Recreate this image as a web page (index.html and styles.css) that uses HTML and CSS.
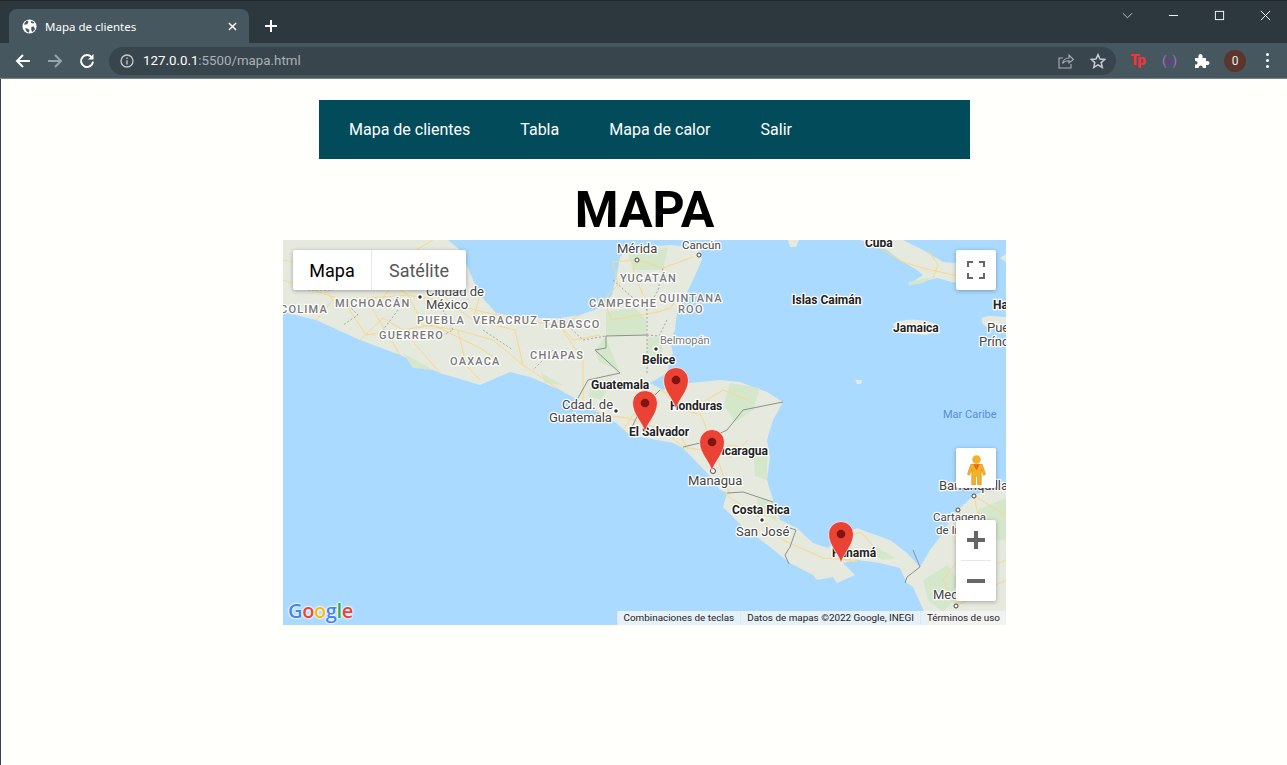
FILE: index.html
```html
<!DOCTYPE html>
<html lang="es">
<head>
    <meta charset="UTF-8">
    <meta name="viewport" content="width=device-width, initial-scale=1.0">
    <title>Mapa de clientes</title>
    <link rel="stylesheet" href="styles.css">
</head>
<body>
    <div class="navegador">
        <div class="pestanas">
            <div class="pestana">
                <svg class="globo" viewBox="0 0 16 16"><circle cx="8" cy="8" r="7.5" fill="#fff"/><path fill="#46575f" d="M2.2 6.2 5.5 5.6 7 3.2 5.6 1.6C3.9 2.3 2.7 4 2.2 6.2ZM7.4 14.4 8 11.6 5.6 10 3.4 9.8C3.9 12.3 5.4 14 7.4 14.4ZM10 8.2 12.6 8 13.8 10.6C13.2 12 12 13.2 10.8 13.8L9.8 11.4ZM9.4 2 9.8 4.2 12.2 4.8 13 3.8C12.2 2.9 10.8 2.2 9.4 2Z"/></svg>
                <span class="pestana-titulo">Mapa de clientes</span>
                <svg class="cerrar" viewBox="0 0 10 10"><path d="M1 1 9 9M9 1 1 9"/></svg>
            </div>
            <svg class="nueva" viewBox="0 0 12 12"><path d="M6 0V12M0 6H12"/></svg>
            <div class="ventana">
                <svg viewBox="0 0 12 12" class="v-chevron"><path d="M1 3.5 6 8.5 11 3.5"/></svg>
                <svg viewBox="0 0 12 12" class="v-btn"><path d="M1 6H11"/></svg>
                <svg viewBox="0 0 12 12" class="v-btn"><rect x="1.5" y="1.5" width="9" height="9"/></svg>
                <svg viewBox="0 0 12 12" class="v-btn"><path d="M1 1 11 11M11 1 1 11"/></svg>
            </div>
        </div>
        <div class="barra">
            <svg class="ico" viewBox="0 0 16 16"><path class="blanco" d="M15 8H2M8 2 2 8 8 14"/></svg>
            <svg class="ico" viewBox="0 0 16 16"><path class="gris" d="M1 8H14M8 2 14 8 8 14"/></svg>
            <svg class="ico" viewBox="0 0 16 16"><path class="blanco" d="M13.2 5A6 6 0 1 0 14 8.6"/><path class="relleno" d="M14.5 1V6.5H9Z"/></svg>
            <div class="direccion">
                <svg class="info" viewBox="0 0 14 14"><circle cx="7" cy="7" r="6"/><path d="M7 6.2V10.4M7 3.6V5"/></svg>
                <span class="url"><b>127.0.0.1</b>:5500/mapa.html</span>
                <svg class="compartir" viewBox="0 0 16 16"><path d="M5 5H1V15H13V11M4.5 10.5C5 7 8 5 11 5V2L15.5 6.5 11 10V7.8C8.5 7.8 6 8.5 4.5 10.5Z"/></svg>
                <svg class="estrella" viewBox="0 0 16 16"><path d="M8 1.6 10 6 14.8 6.4 11.2 9.6 12.3 14.4 8 11.9 3.7 14.4 4.8 9.6 1.2 6.4 6 6Z"/></svg>
            </div>
            <span class="ext-tp">Tp</span>
            <span class="ext-radio">(<i></i>)</span>
            <svg class="ext-puzzle" viewBox="0 0 16 16"><path d="M1 5H4.5C4 2.500 5 1 6.500 1S9 2.500 8.500 5H12V8.200C14 7.700 15.500 8.500 15.500 10S14 12.500 12 12V15H8.700C9 13.400 8 12.500 6.700 12.500S4.400 13.400 4.700 15H1V11.500C2.600 11.800 3.500 11 3.500 9.800S2.600 7.800 1 8.100Z"/></svg>
            <span class="avatar">0</span>
            <span class="kebab"><i></i><i></i><i></i></span>
        </div>
    </div>

    <div class="pagina">
        <nav class="menu">
            <a href="#">Mapa de clientes</a>
            <a href="#">Tabla</a>
            <a href="#">Mapa de calor</a>
            <a href="#">Salir</a>
        </nav>

        <h1>MAPA</h1>

        <div class="mapa">
            <svg class="lienzo" viewBox="0 0 723 385">
                <defs>
                    <g id="pin">
                        <path class="pin-cuerpo" d="M0 30C-1.500 20-12.500 12-12.500 0A12.500 12.500 0 1 1 12.500 0C12.500 12 1.500 20 0 30Z"/>
                        <circle class="pin-punto" r="4.300"/>
                    </g>
                </defs>

                <!-- tierra -->
                <path class="tierra" d="M0 0H165L177 10 197 55 213 73 240 78 277 78 297 75 317 68 329 55 334 33 337 17 345 8 387 5 417 8 419 20 410 40 399 63 394 73 392 90 387 100 390 113 387 120 384 133 367 143 380 150 407 143 437 140 457 142 484 152 500 162 490 180 484 200 487 217 484 240 490 260 497 280 514 288 530 303 545 308 557 297 574 288 587 293 607 300 624 313 637 327 647 310 657 297 667 280 675 270 691 255 723 243V385H647L630 347 624 343 617 328 597 323 574 320 560 323 572 335 554 343 550 337 534 340 530 335 507 323 487 307 460 287 440 267 444 253 437 250 424 233 400 208 390 203 347 195 333 183 300 163 277 150 247 137 227 132 197 145 157 133 117 115 77 100 33 80 0 72Z"/>
                <path class="tierra" d="M577 0 604 10 617 20 634 30 640 35 625 45 654 38 673 43 690 44 690 20 673 23 660 22 640 10 620 0Z"/>
                <path class="tierra" d="M610 84C620 78 640 79 650 83 658 90 650 94 642 95 625 93 612 92 610 84Z"/>
                <path class="tierra" d="M699 78C705 74 715 77 723 77V86L705 87C700 86 698 82 699 78Z"/>
                <path class="tierra" d="M717 18 723 14V22Z"/>
                <path class="tierra" d="M505 0H516L513 7H507Z"/>
                <path class="tierra" d="M572 140H579L578 144H574Z"/>

                <!-- zonas verdes -->
                <path class="verde" d="M323 72 352 68 363 80 363 94 323 96Z"/>
                <path class="verde" d="M364 98 378 96 380 112 364 124Z"/>
                <path class="verde" d="M447 143 477 148 470 170 452 182 441 165Z"/>
                <path class="verde" d="M322 97 336 130 316 122 312 110Z"/>
                <path class="verde" d="M310 140 330 140 318 160 305 156Z"/>
                <path class="verde" d="M625 42 650 37 640 43 627 45Z"/>
                <path class="verde" d="M640 340 665 325 680 350 660 372 645 360Z"/>
                <path class="verde" d="M694 270 723 258V300L705 300Z"/>
                <path class="verde" d="M470 205 484 210 484 240 472 236Z"/>
                <path class="verde" d="M590 305 612 318 600 320 585 312Z"/>
                <path class="verde" d="M345 12 385 8 380 30 350 30Z"/>
                <path class="verde" d="M120 113 150 130 130 128Z"/>
                <path class="verde" d="M258 133 280 145 262 143Z"/>
                <path class="verde" d="M473 258 490 262 494 282 478 272Z"/>

                <!-- carreteras -->
                <path class="via" d="M0 40 60 60 125 55 165 62 200 72 240 80 277 86 290 100 317 95"/>
                <path class="via" d="M60 60 83 95 120 90 150 85 197 108 215 120"/>
                <path class="via" d="M125 55 140 85 175 90 183 125 197 140"/>
                <path class="via" d="M140 20 165 62 190 80 232 90 240 125 277 150"/>
                <path class="via" d="M80 20 125 15 150 0"/>
                <path class="via" d="M0 20 40 28 80 20 110 45 125 55"/>
                <path class="via" d="M77 100 100 78 120 90 157 133"/>
                <path class="via" d="M33 80 50 60 30 35M110 45 90 70 117 115M175 90 210 100 240 125M197 55 190 80"/>
                <path class="via" d="M277 86 300 120 300 163"/>
                <path class="via" d="M330 22 354 20 380 28 410 17"/>
                <path class="via" d="M330 22 335 45 320 60 329 80 375 72 388 68 392 60"/>
                <path class="via" d="M354 20 350 30 360 55 375 72"/>
                <path class="via" d="M297 75 277 86"/>
                <path class="via" d="M340 190 360 160 378 150 400 170 418 175 430 205 440 235 447 255"/>
                <path class="via" d="M378 150 410 168 440 150 465 160"/>
                <path class="via" d="M345 178 380 190 400 207 418 210 450 205 480 215"/>
                <path class="via" d="M300 163 320 175 345 178"/>
                <path class="via" d="M441 254 470 272 500 300 540 318 570 320"/>
                <path class="via" d="M479 280 490 262 497 280"/>
                <path class="via" d="M565 296 578 292 590 306"/>
                <path class="via" d="M562 320 574 322 565 300"/>
                <path class="via" d="M691 256 700 300 680 350 673 366"/>
                <path class="via" d="M675 270 691 300 660 340 673 366 723 340"/>
                <path class="via" d="M691 256 723 275"/>
                <path class="via" d="M590 4 620 22 640 28 670 35 690 38"/>
                <path class="via" d="M645 10 655 25 650 38"/>
                <path class="via" d="M430 190 447 218 465 200M405 210 395 190M700 330 723 320M670 300 690 330"/>

                <!-- fronteras -->
                <path class="borde-estado" d="M364 95V70L375 50 380 28M330 40 350 58 364 70M277 78 300 100 323 96M160 70 170 90 150 100M200 90 230 110M60 60 75 75 60 85M115 70 100 90M270 110 250 130M25 50 50 50"/>
                <path class="borde" d="M364 95 323 96 323 108 312 110 337 133 305 140 295 158 288 170"/>
                <path class="borde-estado" d="M364 95V135M364 95 376 96 385 78"/>
                <path class="borde" d="M377 150 357 170 350 185 347 195"/>
                <path class="borde" d="M400 207 417 203 444 190 460 170 500 162"/>
                <path class="borde" d="M444 253 460 252 490 262"/>
                <path class="borde" d="M507 288 513 290 507 307 502 315 506 324"/>
                <path class="borde" d="M630 310 637 327 624 337 622 343"/>

                <!-- ciudades -->
                <circle class="punto" cx="137" cy="57" r="2.500"/><circle class="punto" cx="333" cy="171" r="2.500"/>
                <circle class="punto" cx="373" cy="109" r="2.500"/><circle class="punto" cx="479" cy="280" r="2.500"/>
                <circle class="punto-v" cx="354" cy="20" r="2"/><circle class="punto-v" cx="416" cy="15" r="2"/>
                <circle class="punto-v" cx="430" cy="231" r="2.500"/><circle class="punto-v" cx="691" cy="256" r="2"/>
                <circle class="punto-v" cx="675" cy="270" r="2"/><circle class="punto-v" cx="673" cy="366" r="2"/>

                <text class="estado" x="-3" y="73">COLIMA</text>
                <text class="estado" x="52" y="67">MICHOACÁN</text>
                <text class="estado" x="134" y="84">PUEBLA</text>
                <text class="estado" x="190" y="84">VERACRUZ</text>
                <text class="estado" x="260" y="88">TABASCO</text>
                <text class="estado" x="96" y="99">GUERRERO</text>
                <text class="estado" x="167" y="125">OAXACA</text>
                <text class="estado" x="247" y="119">CHIAPAS</text>
                <text class="estado" x="306" y="67">CAMPECHE</text>
                <text class="estado" x="337" y="42">YUCATÁN</text>
                <text class="estado" x="376" y="62">QUINTANA</text>
                <text class="estado" x="395" y="73">ROO</text>

                <text class="ciudad" x="143" y="56">Ciudad de</text>
                <text class="ciudad" x="143" y="69">México</text>
                <text class="ciudad" x="334" y="13">Mérida</text>
                <text class="ciudad chica" x="399" y="9">Cancún</text>
                <text class="ciudad gris-t" x="377" y="104">Belmopán</text>
                <text class="ciudad" x="279" y="169">Cdad. de</text>
                <text class="ciudad" x="266" y="182">Guatemala</text>
                <text class="ciudad" x="405" y="245">Managua</text>
                <text class="ciudad" x="453" y="296">San José</text>
                <text class="ciudad" x="656" y="250">Barranquilla</text>
                <text class="ciudad chica" x="650" y="281">Cartagena</text>
                <text class="ciudad chica" x="653" y="294">de Indias</text>
                <text class="ciudad" x="650" y="359">Medellín</text>
                <text class="ciudad" x="704" y="92">Puerto</text>
                <text class="ciudad" x="696" y="106">Príncipe</text>

                <text class="pais" x="582" y="7">Cuba</text>
                <text class="pais" x="509" y="64">Islas Caimán</text>
                <text class="pais" x="610" y="92">Jamaica</text>
                <text class="pais" x="710" y="69">Haití</text>
                <text class="pais" x="359" y="124">Belice</text>
                <text class="pais" x="308" y="149">Guatemala</text>
                <text class="pais" x="387" y="170">Honduras</text>
                <text class="pais" x="346" y="196">El Salvador</text>
                <text class="pais" x="430" y="215">Nicaragua</text>
                <text class="pais" x="449" y="274">Costa Rica</text>
                <text class="pais" x="549" y="317">Panamá</text>
                <text class="mar" x="660" y="178">Mar Caribe</text>

                <use href="#pin" x="393" y="140"/>
                <use href="#pin" x="362" y="163"/>
                <use href="#pin" x="429" y="202"/>
                <use href="#pin" x="558" y="294"/>
            </svg>

            <div class="tipo-mapa">
                <button class="tipo activo">Mapa</button>
                <button class="tipo">Satélite</button>
            </div>

            <button class="control pantalla">
                <svg viewBox="0 0 18 18"><path d="M1 6V1H6M12 1H17V6M17 12V17H12M6 17H1V12"/></svg>
            </button>

            <button class="control pegman">
                <svg viewBox="0 0 20 32">
                    <circle cx="10" cy="4.500" r="4.500" fill="#f6b026"/>
                    <path fill="#f6b026" stroke="#c98c14" stroke-width=".6" d="M4 9.500H16L19.500 20 17.500 21 15 15V31H11V22H9V31H5V15L2.500 21 .5 20Z"/>
                    <path fill="#e2711d" d="M6.500 9.500H13.500L10 16Z"/>
                </svg>
            </button>

            <div class="zoom">
                <button class="zoom-btn"><svg viewBox="0 0 18 18"><path d="M9 0V18M0 9H18"/></svg></button>
                <hr class="zoom-linea">
                <button class="zoom-btn"><svg viewBox="0 0 18 18"><path d="M0 9H18"/></svg></button>
            </div>

            <div class="logo"><span class="azul">G</span><span class="rojo">o</span><span class="amarillo">o</span><span class="azul">g</span><span class="verde-l">l</span><span class="rojo">e</span></div>

            <div class="creditos">
                <span>Combinaciones de teclas</span>
                <span>Datos de mapas ©2022 Google, INEGI</span>
                <span>Términos de uso</span>
            </div>
        </div>
    </div>
</body>
</html>
```

FILE: styles.css
```css
body {
    font-family: 'Roboto', sans-serif;
    background-color: #fffffb;
    margin: 0;
    height: 765px;
    overflow: hidden;
    box-shadow: inset 1px 0 0 #3a4249;
}

/* Navegador */
.navegador {
    font-family: 'Noto Sans', 'Open Sans', sans-serif;
}

.pestanas {
    display: flex;
    align-items: flex-end;
    height: 43px;
    padding-left: 9px;
    background-color: #2d383e;
    border-top: 1px solid #22282c;
    box-sizing: border-box;
}

.pestana {
    display: flex;
    align-items: center;
    width: 240px;
    height: 34px;
    padding: 0 12px 0 13px;
    box-sizing: border-box;
    background-color: #46575f;
    border-radius: 8px 8px 0 0;
}

.globo {
    width: 15px;
    height: 15px;
    margin-right: 8px;
}

.pestana-titulo {
    flex: 1;
    color: #fff;
    font-size: 11.500px;
}

.cerrar {
    width: 9px;
    height: 9px;
    fill: none;
    stroke: #fff;
    stroke-width: 1.600;
}

.nueva {
    width: 12px;
    height: 12px;
    margin: 0 0 11px 16px;
    fill: none;
    stroke: #fff;
    stroke-width: 2;
}

.ventana {
    display: flex;
    align-items: center;
    gap: 35px;
    margin-left: auto;
    align-self: flex-start;
    padding: 9px 16px 0 0;
}

.ventana svg {
    width: 11px;
    height: 11px;
    fill: none;
    stroke: #fff;
    stroke-width: 1;
}

.ventana .v-chevron {
    stroke: #c8ced1;
}

.barra {
    display: flex;
    align-items: center;
    height: 36px;
    background-color: #46575f;
    border-bottom: 1px solid #76858c;
    box-sizing: border-box;
    padding-left: 15px;
}

.ico {
    width: 16px;
    height: 16px;
    margin-right: 16px;
    fill: none;
    stroke-width: 2;
}

.blanco {
    stroke: #fff;
}

.gris {
    stroke: #98a4aa;
}

.relleno {
    fill: #fff;
    stroke: none;
}

.direccion {
    display: flex;
    align-items: center;
    width: 1007px;
    height: 28px;
    margin-left: -2px;
    padding-left: 11px;
    box-sizing: border-box;
    background-color: #38454d;
    border-radius: 14px;
}

.info {
    width: 14px;
    height: 14px;
    fill: none;
    stroke: #c5cbce;
    stroke-width: 1.300;
}

.url {
    flex: 1;
    margin-left: 9px;
    font-family: 'Roboto', sans-serif;
    font-size: 13.300px;
    color: #a9b2b6;
}

.url b {
    font-weight: 400;
    color: #fff;
}

.compartir {
    width: 16px;
    height: 16px;
    margin-right: 16px;
    fill: none;
    stroke: #a9b2b6;
    stroke-width: 1.100;
}

.estrella {
    width: 16px;
    height: 16px;
    margin-right: 10px;
    fill: none;
    stroke: #c5cbce;
    stroke-width: 1.500;
}

.ext-tp {
    margin-left: 14px;
    width: 17px;
    color: #f3333a;
    font: 900 15px/1 'Roboto', sans-serif;
    letter-spacing: -1.500px;
}

.ext-radio {
    display: flex;
    align-items: center;
    gap: 1px;
    margin-left: 15px;
    width: 16px;
    color: #b06ccb;
    font: 400 13px/1 'Roboto', sans-serif;
}

.ext-radio i {
    width: 4px;
    height: 4px;
    border-radius: 50%;
    background-color: #7b2fa8;
}

.ext-puzzle {
    width: 16px;
    height: 16px;
    margin-left: 16px;
    fill: #fff;
}

.avatar {
    width: 22px;
    height: 22px;
    margin-left: 14px;
    border-radius: 50%;
    background-color: #5b362c;
    color: #eee;
    font: 400 12px/22px 'Roboto', sans-serif;
    text-align: center;
}

.kebab {
    display: flex;
    flex-direction: column;
    gap: 3px;
    margin-left: 20px;
}

.kebab i {
    width: 3px;
    height: 3px;
    border-radius: 50%;
    background-color: #fff;
}

/* Pagina */
.pagina {
    display: flex;
    flex-direction: column;
    align-items: center;
    padding-left: 2px;
}

.menu {
    display: flex;
    gap: 50px;
    width: 651px;
    height: 59px;
    margin-top: 21px;
    padding-left: 30px;
    box-sizing: border-box;
    align-items: center;
    background-color: #024b5b;
}

.menu a {
    color: #fff;
    font-size: 16px;
    text-decoration: none;
}

h1 {
    margin: 21px 0 0;
    font-size: 50px;
    line-height: 60px;
    font-weight: 700;
    color: #000;
}

/* Mapa */
.mapa {
    position: relative;
    width: 723px;
    height: 385px;
    overflow: hidden;
    background-color: #aadaff;
}

.lienzo {
    display: block;
    width: 723px;
    height: 385px;
}

.tierra {
    fill: #e6e9de;
}

.verde {
    fill: #d4e7cb;
}

.via {
    fill: none;
    stroke: #fad888;
    stroke-width: 1;
}

.borde {
    fill: none;
    stroke: #8d918c;
    stroke-width: 1;
}

.borde-estado {
    fill: none;
    stroke: #a6a8a2;
    stroke-width: 1;
    stroke-dasharray: 2 2;
}

.punto {
    fill: #333;
    stroke: #fff;
    stroke-width: 1.500;
}

.punto-v {
    fill: #fff;
    stroke: #444;
    stroke-width: 1;
}

.lienzo text {
    paint-order: stroke;
    stroke: #fff;
    stroke-width: 2.500px;
    stroke-linejoin: round;
}

.estado {
    font-size: 11px;
    font-weight: 500;
    letter-spacing: 1.200px;
    fill: #777;
}

.ciudad {
    font-size: 13px;
    fill: #444;
}

.ciudad.chica {
    font-size: 11.500px;
}

.ciudad.gris-t {
    font-size: 11px;
    fill: #777;
}

.pais {
    font-size: 12px;
    font-weight: 700;
    fill: #222;
}

.lienzo .mar {
    font-size: 11px;
    fill: #5b8dd6;
    stroke: none;
}

.pin-cuerpo {
    fill: #ea4335;
    stroke: #fff;
    stroke-opacity: .7;
    stroke-width: 1;
}

.pin-punto {
    fill: #7f1410;
}

/* Controles */
.tipo-mapa {
    position: absolute;
    top: 10px;
    left: 10px;
    display: flex;
    height: 40px;
    background-color: #fff;
    border-radius: 2px;
    box-shadow: 0 1px 4px rgba(0, 0, 0, 0.3);
}

.tipo {
    border: none;
    background: none;
    padding: 0 17px;
    font-family: 'Roboto', sans-serif;
    font-size: 18px;
    color: #565656;
}

.tipo.activo {
    width: 79px;
    padding: 0;
    color: #000;
    border-right: 1px solid #e6e6e6;
}

.control {
    position: absolute;
    left: 673px;
    width: 40px;
    height: 40px;
    padding: 0;
    border: none;
    border-radius: 2px;
    background-color: #fff;
    box-shadow: 0 1px 4px rgba(0, 0, 0, 0.3);
}

.pantalla {
    top: 10px;
}

.pantalla svg {
    display: block;
    width: 18px;
    height: 18px;
    margin: auto;
    fill: none;
    stroke: #666;
    stroke-width: 2;
}

.pegman {
    top: 208px;
}

.pegman svg {
    display: block;
    width: 19px;
    height: 31px;
    margin: 4px auto 0;
}

.zoom {
    position: absolute;
    left: 673px;
    top: 280px;
    width: 40px;
    height: 81px;
    background-color: #fff;
    border-radius: 2px;
    box-shadow: 0 1px 4px rgba(0, 0, 0, 0.3);
}

.zoom-btn {
    display: block;
    width: 40px;
    height: 40px;
    padding: 0;
    border: none;
    background: none;
}

.zoom-btn svg {
    display: block;
    width: 18px;
    height: 18px;
    margin: auto;
    fill: none;
    stroke: #666;
    stroke-width: 4;
}

.zoom-linea {
    width: 30px;
    height: 1px;
    margin: 0 auto;
    border: none;
    background-color: #e6e6e6;
}

.logo {
    position: absolute;
    left: 5px;
    bottom: 0;
    font-family: 'Open Sans', sans-serif;
    font-size: 20px;
    font-weight: 600;
    line-height: 28px;
    letter-spacing: -.4px;
    text-shadow: 0 0 2px #fff, 0 0 2px #fff, 0 0 3px #fff;
}

.azul {
    color: #4285f4;
}

.rojo {
    color: #ea4335;
}

.amarillo {
    color: #fbbc05;
}

.verde-l {
    color: #34a853;
}

.creditos {
    position: absolute;
    right: 0;
    bottom: 0;
    display: flex;
    height: 14px;
    font-size: 9.900px;
    line-height: 14px;
    color: #222;
}

.creditos span {
    padding: 0 6px;
    background-color: rgba(245, 245, 245, 0.8);
    border-left: 1px solid #e0e8ef;
}
```
